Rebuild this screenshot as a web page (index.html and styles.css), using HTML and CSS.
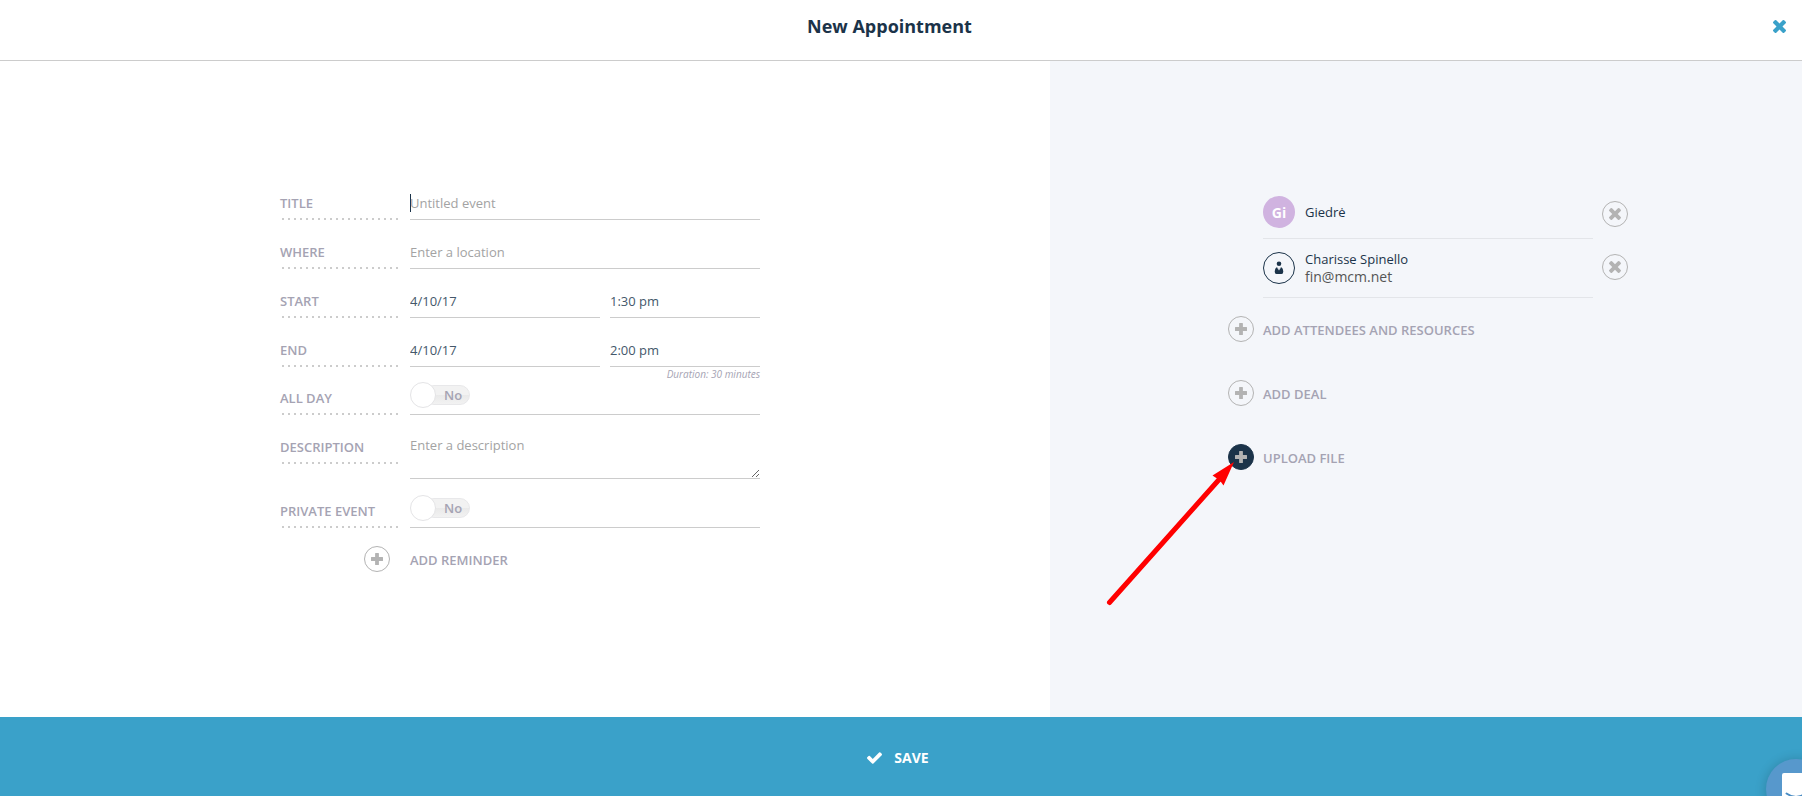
FILE: index.html
```html
<!DOCTYPE html>
<html lang="en">
<head>
    <meta charset="UTF-8">
    <meta name="viewport" content="width=device-width, initial-scale=1.0">
    <title>New Appointment</title>
    <link rel="stylesheet" href="styles.css">
</head>
<body>
    <svg class="sprite" aria-hidden="true">
        <symbol id="icon-plus" viewBox="0 0 12 12">
            <path d="M4.600 0h2.800q.5 0 .5.5v3.600h3.600q.5 0 .5.5v2.800q0 .5-.5.5H7.900v3.600q0 .5-.5.5H4.600q-.5 0-.5-.5V7.900H.5q-.5 0-.5-.5V4.600q0-.5.5-.5h3.600V.5q0-.5.5-.5z"/>
        </symbol>
        <symbol id="icon-times" viewBox="302 366 1188 1188">
            <path d="M1490 1322q0 40-28 68l-136 136q-28 28-68 28t-68-28l-294-294-294 294q-28 28-68 28t-68-28l-136-136q-28-28-28-68t28-68l294-294-294-294q-28-28-28-68t28-68l136-136q28-28 68-28t68 28l294 294 294-294q28-28 68-28t68 28l136 136q28 28 28 68t-28 68l-294 294 294 294q28 28 28 68z"/>
        </symbol>
    </svg>

    <header class="header">
        <h1>New Appointment</h1>
        <button type="button" class="close" aria-label="Close"><svg><use href="#icon-times"/></svg></button>
    </header>

    <main class="content">
        <section class="details">
            <form id="appointmentForm" class="form">
                <div class="row">
                    <label class="name" for="title">TITLE</label>
                    <input type="text" class="field active" id="title" name="title" placeholder="Untitled event">
                </div>
                <div class="row">
                    <label class="name" for="where">WHERE</label>
                    <input type="text" class="field" id="where" name="where" placeholder="Enter a location">
                </div>
                <div class="row">
                    <label class="name" for="startDate">START</label>
                    <div class="datetime">
                        <input type="text" class="field" id="startDate" name="startDate" value="4/10/17">
                        <input type="text" class="field" name="startTime" value="1:30 pm" aria-label="Start time">
                    </div>
                </div>
                <div class="row row-end">
                    <label class="name" for="endDate">END</label>
                    <div class="datetime">
                        <input type="text" class="field" id="endDate" name="endDate" value="4/10/17">
                        <input type="text" class="field" name="endTime" value="2:00 pm" aria-label="End time">
                    </div>
                </div>
                <p class="duration">Duration: 30 minutes</p>
                <div class="row">
                    <label class="name" for="allDay">ALL DAY</label>
                    <div class="field">
                        <label class="toggle">
                            <input type="checkbox" id="allDay" name="allDay">
                            <span>No</span>
                        </label>
                    </div>
                </div>
                <div class="row">
                    <label class="name" for="description">DESCRIPTION</label>
                    <textarea class="field" id="description" name="description" placeholder="Enter a description"></textarea>
                </div>
                <div class="row">
                    <label class="name" for="private">PRIVATE EVENT</label>
                    <div class="field">
                        <label class="toggle">
                            <input type="checkbox" id="private" name="private">
                            <span>No</span>
                        </label>
                    </div>
                </div>
                <button type="button" class="add add-reminder">
                    <span class="circle"><svg><use href="#icon-plus"/></svg></span>
                    ADD REMINDER
                </button>
            </form>
        </section>

        <aside class="related">
            <div class="panel">
                <ul class="attendees">
                    <li>
                        <div class="person">
                            <span class="avatar initials">Gi</span>
                            <div class="who">Giedrė</div>
                        </div>
                        <button type="button" class="circle" aria-label="Remove Giedrė"><svg><use href="#icon-times"/></svg></button>
                    </li>
                    <li>
                        <div class="person">
                            <span class="avatar contact">
                                <svg viewBox="0 0 10 14">
                                    <circle cx="5" cy="2.700" r="2.300"/>
                                    <path d="M3 6l1.500 3.500L5 7l.5 2.500L7 6q2.300 1.400 2.300 4.500 0 2.500-1.800 2.500h-5Q.7 13 .7 10.500.7 7.400 3 6z"/>
                                </svg>
                            </span>
                            <div class="who">Charisse Spinello<span class="email">fin@mcm.net</span></div>
                        </div>
                        <button type="button" class="circle" aria-label="Remove Charisse Spinello"><svg><use href="#icon-times"/></svg></button>
                    </li>
                </ul>
                <button type="button" class="add">
                    <span class="circle"><svg><use href="#icon-plus"/></svg></span>
                    ADD ATTENDEES AND RESOURCES
                </button>
                <button type="button" class="add">
                    <span class="circle"><svg><use href="#icon-plus"/></svg></span>
                    ADD DEAL
                </button>
                <div class="upload">
                    <button type="button" class="add">
                        <span class="circle filled"><svg><use href="#icon-plus"/></svg></span>
                        UPLOAD FILE
                    </button>
                    <svg class="arrow" viewBox="0 0 132 148" aria-hidden="true">
                        <path d="M5.500 142.500L116 18.500" stroke="#f00" stroke-width="5" stroke-linecap="round"/>
                        <path d="M130 2L108.500 15.500l4.500 3 4 3.500 2.500 3.500z" fill="#f00"/>
                    </svg>
                </div>
            </div>
        </aside>
    </main>

    <button type="submit" form="appointmentForm" class="save">
        <svg viewBox="121 334 1550 1188"><path d="M1671 566q0 40-28 68l-724 724-136 136q-28 28-68 28t-68-28l-136-136-362-362q-28-28-28-68t28-68l136-136q28-28 68-28t68 28l294 295 656-657q28-28 68-28t68 28l136 136q28 28 28 68z"/></svg>
        SAVE
    </button>

    <button type="button" class="chat" aria-label="Open chat">
        <svg viewBox="0 0 28 32">
            <path d="M2 0h24q2 0 2 2v30l-6-4H2q-2 0-2-2V2Q0 0 2 0z" fill="#fff"/>
            <path d="M4.500 20.500q9.500 7 19 0" fill="none" stroke="#4a8cc3" stroke-width="2" stroke-linecap="round"/>
        </svg>
    </button>
</body>
</html>
```

FILE: styles.css
```css
* {
    box-sizing: border-box;
}

body {
    font-family: "Open Sans", "Noto Sans", sans-serif;
    font-size: 13px;
    color: #1b3349;
    background-color: #fff;
    margin: 0;
    display: flex;
    flex-direction: column;
    min-height: 100vh;
}

button,
input,
textarea {
    font: inherit;
    color: inherit;
    background: none;
    border: none;
    border-radius: 0;
    margin: 0;
    padding: 0;
    outline: none;
}

button {
    cursor: pointer;
}

svg {
    display: block;
    fill: currentColor;
}

.sprite {
    position: absolute;
    width: 0;
    height: 0;
}

/* header */
.header {
    display: flex;
    align-items: center;
    height: 61px;
    padding: 0 16px 8px 6px;
    border-bottom: 1px solid #ccc;
}

.header h1 {
    flex: 1;
    margin: 0;
    font-size: 18px;
    font-weight: 700;
    text-align: center;
}

.close {
    color: #3aa1c9;
}

.close svg {
    width: 13px;
    height: 13px;
}

.content {
    flex: 1;
    display: flex;
}

/* appointment form */
.details {
    width: 58.27%;
    padding: 126px 10px 40px 0;
}

.form {
    width: 480px;
    margin: 0 auto;
}

.row {
    display: grid;
    grid-template-columns: 120px 1fr;
    column-gap: 10px;
    align-items: start;
    margin-bottom: 16px;
}

.row-end {
    margin-bottom: 0;
}

.name {
    padding: 2px 0;
    line-height: 29px;
    font-weight: 600;
    color: #a5a3b3;
    background: repeating-linear-gradient(to right, transparent 0 2px, #ccc 2px 4px, transparent 4px 6px) bottom / 100% 2px no-repeat;
}

.field {
    display: block;
    width: 100%;
    height: 33px;
    border-bottom: 1px solid #ccc;
    color: #44586b;
}

.field::placeholder {
    color: #a3a3a3;
    opacity: 1;
}

/* text cursor */
.active {
    background: linear-gradient(#1b3349, #1b3349) left 7px / 1px 18px no-repeat;
}

textarea.field {
    height: 48px;
    padding-top: 5px;
    line-height: 18px;
    resize: vertical;
}

.datetime {
    display: grid;
    grid-template-columns: 190px 1fr;
    gap: 10px;
}

.duration {
    margin: 0;
    font-size: 10px;
    line-height: 15px;
    font-style: italic;
    text-align: right;
    color: #a5a3b3;
}

.toggle {
    display: flex;
    align-items: center;
    width: 60px;
    height: 26px;
    color: #a5a3b3;
    font-weight: 600;
}

.toggle input {
    appearance: none;
    flex: none;
    width: 26px;
    height: 26px;
    border: 1px solid #e4e4e6;
    border-radius: 50%;
    background-color: #fff;
    z-index: 1;
}

.toggle span {
    flex: 1;
    height: 20px;
    margin-left: -12px;
    padding-left: 19px;
    line-height: 19px;
    border: 1px solid #e8e8ea;
    border-radius: 10px;
    background: linear-gradient(#f2f2f2 50%, #e9e9e9 50%, #f2f2f2);
}

/* round buttons */
.circle {
    flex: none;
    display: flex;
    align-items: center;
    justify-content: center;
    width: 26px;
    height: 26px;
    border: 1px solid #b3b3b3;
    border-radius: 50%;
    color: #b3b3b3;
}

.circle svg {
    width: 12px;
    height: 12px;
}

.filled {
    background-color: #1b3349;
    border-color: #1b3349;
}

.add {
    display: flex;
    align-items: flex-start;
    gap: 9px;
    margin-bottom: 36px;
    line-height: 28px;
    font-weight: 600;
    color: #a5a3b3;
}

.add-reminder {
    gap: 20px;
    margin: 18px 0 0 84px;
}

/* attendees, deal and files */
.related {
    flex: 1;
    padding: 122px 0 40px 4px;
    background-color: #f4f6fa;
}

.panel {
    width: 400px;
    margin: 0 auto;
}

.attendees {
    list-style: none;
    margin: 0 0 18px 35px;
    padding: 0;
}

.attendees li {
    display: flex;
    align-items: flex-start;
    gap: 9px;
}

.attendees li:first-child {
    padding-top: 3px;
}

.attendees .circle {
    margin-top: 15px;
}

.person {
    flex: 1;
    display: flex;
    align-items: center;
    gap: 10px;
    height: 59px;
    border-bottom: 1px solid #e3e5e9;
}

.attendees li:first-child .person {
    height: 53px;
}

.avatar {
    display: flex;
    align-items: center;
    justify-content: center;
    width: 32px;
    height: 32px;
    border-radius: 50%;
}

.initials {
    font-size: 14px;
    font-weight: 700;
    color: #fff;
    background-color: #d0b3e0;
}

.contact {
    border: 1px solid #1b3349;
}

.contact svg {
    width: 10px;
    height: 14px;
}

.who {
    line-height: 18px;
    font-weight: 500;
}

.email {
    display: block;
    font-size: 14px;
    font-weight: 400;
    color: #555;
}

.upload {
    position: relative;
}

.arrow {
    position: absolute;
    left: -124px;
    top: 16px;
    width: 132px;
    height: 148px;
}

/* footer */
.save {
    display: flex;
    align-items: center;
    justify-content: center;
    gap: 12px;
    height: 79px;
    padding: 2px 6px 0 0;
    font-size: 14px;
    font-weight: 700;
    color: #fff;
    background-color: #3aa1c9;
}

.save svg {
    width: 15px;
    height: 12px;
}

.chat {
    position: fixed;
    right: -24px;
    bottom: -23px;
    width: 60px;
    height: 60px;
    border-radius: 50%;
    background-color: #5798cc;
    box-shadow: 0 1px 12px rgba(0, 0, 0, 0.2);
}

.chat svg {
    width: 28px;
    height: 32px;
    margin: 0 auto;
}
```
